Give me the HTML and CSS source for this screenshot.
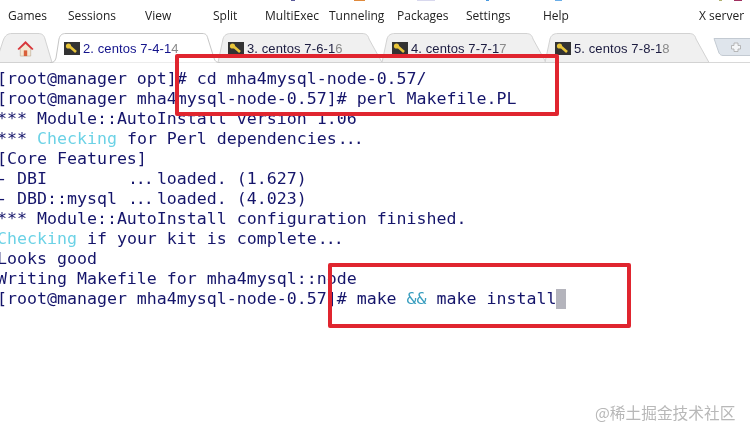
FILE: index.html
```html
<!DOCTYPE html>
<html lang="en">
<head>
<meta charset="utf-8">
<title>MobaXterm session</title>
<link rel="stylesheet" href="styles.css">
</head>
<body>
<div class="page">
  <div class="strip"></div>
  <nav class="menu">
    <span class="m m-games">Games</span>
    <span class="m m-sessions">Sessions</span>
    <span class="m m-view">View</span>
    <span class="m m-split">Split</span>
    <span class="m m-multi">MultiExec</span>
    <span class="m m-tunnel">Tunneling</span>
    <span class="m m-packages">Packages</span>
    <span class="m m-settings">Settings</span>
    <span class="m m-help">Help</span>
    <span class="m m-x">X server</span>
  </nav>
  <div class="tabs">
    <div class="tab tab-home">
      <svg class="shape" viewBox="0 0 54 30" preserveAspectRatio="none"><path d="M-4 29.500L3 8C5 2 8 .5 12 .5H38C42 .5 44 2 45 6L52 29.500Z" fill="#f0f0f0" stroke="#d2d2d2"/></svg>
      <svg class="home" viewBox="0 0 18 18" width="17" height="17"><path d="M3.500 9V17H14.500V9L9 4Z" fill="#f3e7d3" stroke="#b9a58c" stroke-width=".6"/><rect x="7.200" y="11" width="3.600" height="6" fill="#d9603a"/><path d="M0.500 9.500L9 1L17.500 9.500L16 10.500L9 4L2 10.500Z" fill="#d9363a"/></svg>
    </div>
    <div class="tab tab-active">
      <svg class="shape" viewBox="0 0 170 30" preserveAspectRatio="none"><path d="M0 29.500H1C4 29.500 5 28 6 25L9 6C10 2 12 .5 16 .5H152C156 .5 157 2 158 6L164 25C165 28 166 29.500 170 29.500" fill="#fff" stroke="#c6c6c6"/></svg>
      <svg class="key" viewBox="0 0 16 13" width="16" height="13"><rect width="16" height="13" fill="#333"/><path d="M4 3L12 10" stroke="#e8c53a" stroke-width="2.600"/><circle cx="4.500" cy="4" r="2.600" fill="#e8c53a"/></svg>
      <span class="label active-label">2. centos 7-4-1<span class="fade">4</span></span>
    </div>
    <div class="tab tab-plain tab-3">
      <svg class="shape" viewBox="0 0 170 30" preserveAspectRatio="none"><path d="M4 29.500L9 6C10 2 13 .5 17 .5H148C152 .5 154 2 155 6L168 29.500Z" fill="#f0f0f0" stroke="#d2d2d2"/></svg>
      <svg class="key" viewBox="0 0 16 13" width="16" height="13"><rect width="16" height="13" fill="#333"/><path d="M4 3L12 10" stroke="#e8c53a" stroke-width="2.600"/><circle cx="4.500" cy="4" r="2.600" fill="#e8c53a"/></svg>
      <span class="label">3. centos 7-6-1<span class="fade">6</span></span>
    </div>
    <div class="tab tab-plain tab-4">
      <svg class="shape" viewBox="0 0 170 30" preserveAspectRatio="none"><path d="M4 29.500L9 6C10 2 13 .5 17 .5H148C152 .5 154 2 155 6L168 29.500Z" fill="#f0f0f0" stroke="#d2d2d2"/></svg>
      <svg class="key" viewBox="0 0 16 13" width="16" height="13"><rect width="16" height="13" fill="#333"/><path d="M4 3L12 10" stroke="#e8c53a" stroke-width="2.600"/><circle cx="4.500" cy="4" r="2.600" fill="#e8c53a"/></svg>
      <span class="label">4. centos 7-7-1<span class="fade">7</span></span>
    </div>
    <div class="tab tab-plain tab-5">
      <svg class="shape" viewBox="0 0 170 30" preserveAspectRatio="none"><path d="M4 29.500L9 6C10 2 13 .5 17 .5H148C152 .5 154 2 155 6L168 29.500Z" fill="#f0f0f0" stroke="#d2d2d2"/></svg>
      <svg class="key" viewBox="0 0 16 13" width="16" height="13"><rect width="16" height="13" fill="#333"/><path d="M4 3L12 10" stroke="#e8c53a" stroke-width="2.600"/><circle cx="4.500" cy="4" r="2.600" fill="#e8c53a"/></svg>
      <span class="label">5. centos 7-8-1<span class="fade">8</span></span>
    </div>
    <div class="tab-new">
      <svg viewBox="0 0 40 18" width="40" height="18"><path d="M1 .5H40V17.500H10C8 17.500 7 16.500 6 15Z" fill="#dfe5ec" stroke="#c3cad2"/><path d="M21 5H25V7.500H27.500V11H25V13.500H21V11H18.500V7.500H21Z" fill="#f4f6f8" stroke="#a9a9a9" stroke-width=".8"/></svg>
    </div>
  </div>
  <pre class="term">[root@manager opt]# cd mha4mysql-node-0.57/
[root@manager mha4mysql-node-0.57]# perl Makefile.PL
*** Module::AutoInstall version 1.06
*** <span class="cy">Checking</span> for Perl dependencies<span class="dots">...</span>
[Core Features]
- DBI        <span class="dots">...</span>loaded. (1.627)
- DBD::mysql <span class="dots">...</span>loaded. (4.023)
*** Module::AutoInstall configuration finished.
<span class="cy">Checking</span> if your kit is complete<span class="dots">...</span>
Looks good
Writing Makefile for mha4mysql::node
[root@manager mha4mysql-node-0.57]# make <span class="amp">&amp;&amp;</span> make install<span class="cursor"> </span></pre>
  <div class="red red-1"></div>
  <div class="red red-2"></div>
  <div class="mark">@稀土掘金技术社区</div>
</div>
</body>
</html>
```
FILE: styles.css
```css
* { box-sizing: border-box; }
html, body { margin: 0; padding: 0; background: #fff; }
.page { position: relative; width: 750px; height: 436px; overflow: hidden; background: #fff; }

.strip {
  position: absolute; left: 0; top: 0; width: 750px; height: 1px;
  background: linear-gradient(90deg,
    #fff 291px, #5a5a9a 291px, #5a5a9a 295px, #fff 295px,
    #fff 354px, #e08a3c 354px, #e08a3c 365px, #fff 365px,
    #fff 417px, #d8d8ee 417px, #d8d8ee 435px, #fff 435px,
    #fff 486px, #4a9ae0 486px, #4a9ae0 489px, #fff 489px,
    #fff 555px, #6aaee8 555px, #6aaee8 562px, #fff 562px,
    #fff 719px, #b0b070 719px, #b0b070 722px, #fff 722px,
    #fff 734px, #a03060 734px, #a03060 742px, #fff 742px);
}

.menu { display: flex; height: 33px; padding: 7px 0 0 8px; font: 12px/18px "Open Sans", sans-serif; color: #222; filter: blur(.25px); }
.m { display: block; flex: none; }
.m-games { width: 60px; }
.m-sessions { width: 77px; }
.m-view { width: 68px; }
.m-split { width: 52px; }
.m-multi { width: 64px; }
.m-tunnel { width: 68px; }
.m-packages { width: 69px; }
.m-settings { width: 77px; }
.m-help { width: 156px; }

.tabs { display: flex; height: 30px; border-bottom: 1px solid #d8d8d8; }
.tab { position: relative; display: flex; align-items: center; flex: none; height: 30px; }
.shape { position: absolute; inset: 0; width: 100%; height: 100%; }
.tab > .key, .tab > .label, .tab > .home { position: relative; }
.tab-home { width: 54px; padding-left: 17px; }
.tab-active { width: 170px; margin-left: -4px; padding-left: 14px; z-index: 2; }
.tab-plain { width: 170px; padding-left: 14px; }
.tab-3 { margin-left: -6px; z-index: 1; }
.tab-4 { margin-left: -6px; }
.tab-5 { margin-left: -7px; }
.tab-new { margin: 5px 0 0 2px; height: 18px; }
.key { flex: none; margin-right: 3px; }
.label { font: 13px "Liberation Sans", sans-serif; letter-spacing: .1px; color: #1c1c40; white-space: nowrap; filter: blur(.25px); }
.active-label { color: #14148c; }
.fade { color: #8a8a8a; }

.term {
  margin: 6px 0 0 -3px;
  font: 16.600px/20px "DejaVu Sans Mono", monospace;
  color: #15156b;
  white-space: pre;
  filter: blur(.3px);
}
.cy { color: #6cd2e6; }
.amp { color: #3b9fc0; }
.dots { display: inline-block; width: 30px; padding-left: 1px; letter-spacing: -2px; }
.cursor { display: inline-block; width: 10px; background: #b4b4bc; }

.red { position: absolute; z-index: 5; border: 4px solid #e0252f; border-radius: 2px; }
.red-1 { left: 175px; top: 54px; width: 384px; height: 62px; }
.red-2 { left: 328px; top: 263px; width: 303px; height: 65px; }
.mark { position: absolute; left: 595px; top: 402px; font: 15.700px/22px "Noto Sans CJK SC", sans-serif; color: #b8b8b8; filter: blur(.3px); }
```
